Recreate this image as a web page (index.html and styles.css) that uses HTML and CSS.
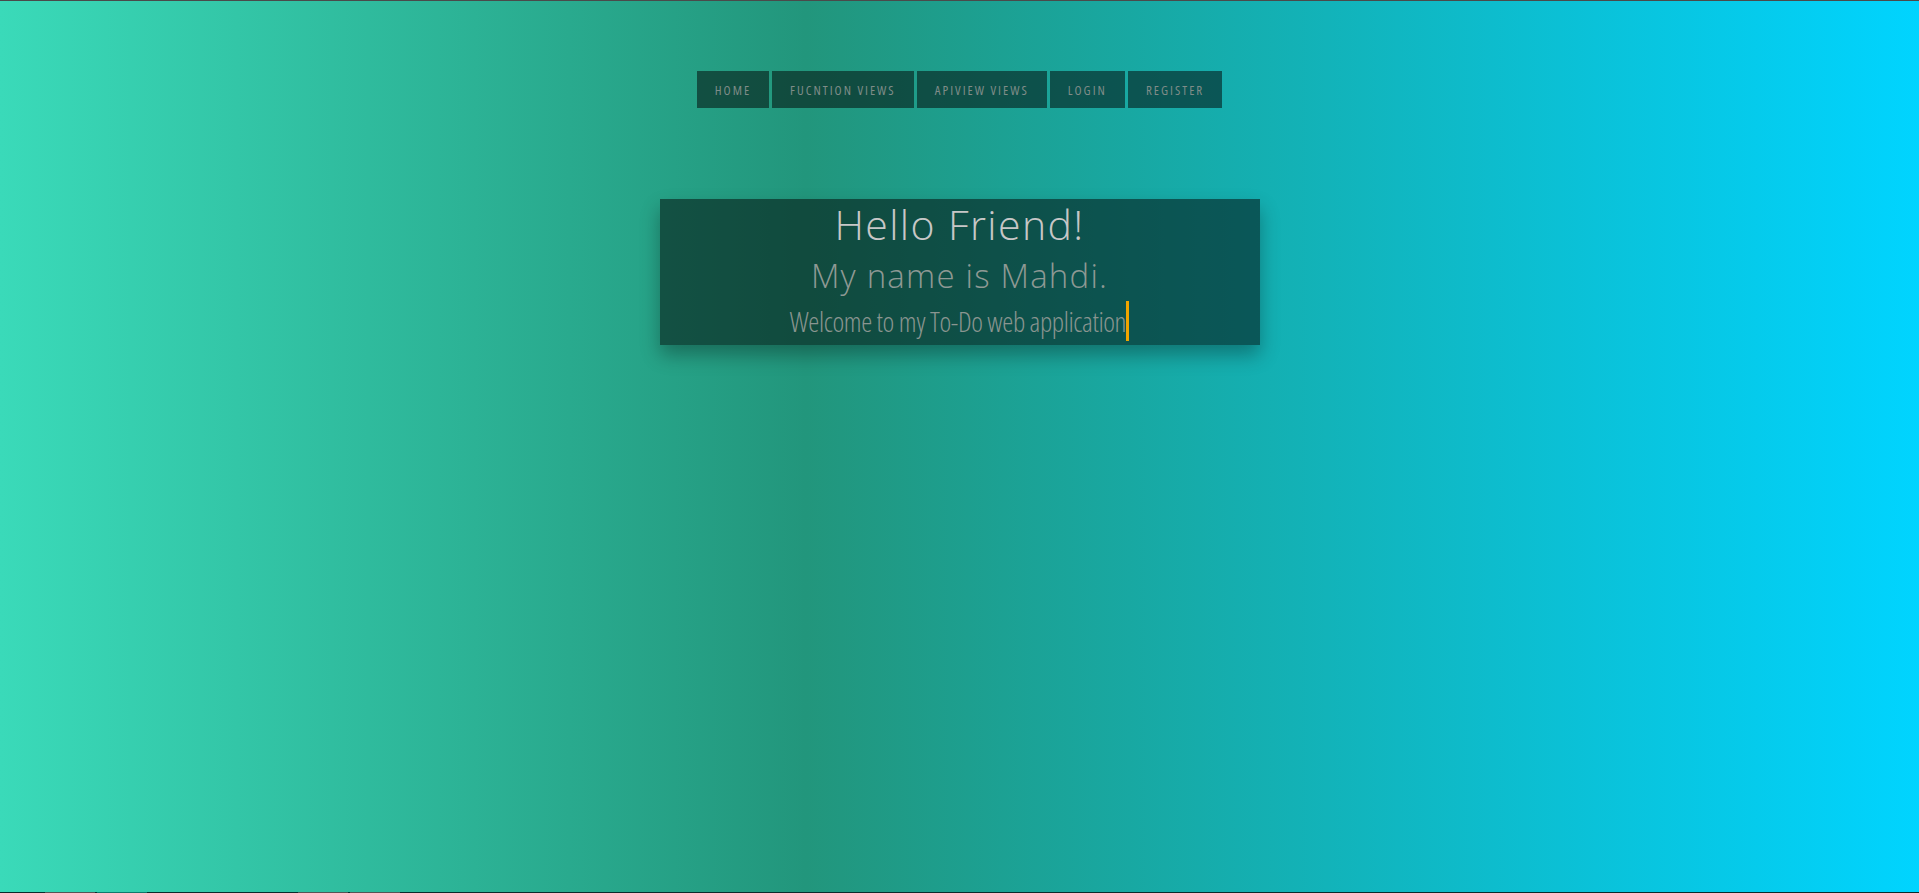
FILE: index.html
```html
<!DOCTYPE html>
<html lang="en">
<head>
<meta charset="utf-8">
<title>To-Do</title>
<link rel="stylesheet" href="styles.css">
</head>
<body>
<div class="page">
  <nav class="nav">
    <a class="nav-item" href="#">Home</a>
    <a class="nav-item" href="#">Fucntion Views</a>
    <a class="nav-item" href="#">APIView Views</a>
    <a class="nav-item" href="#">Login</a>
    <a class="nav-item" href="#">Register</a>
  </nav>
  <section class="hero">
    <h1 class="hero-title">Hello Friend!</h1>
    <h2 class="hero-sub">My name is Mahdi.</h2>
    <p class="hero-typed"><span class="typed">Welcome to my To-Do web application</span></p>
  </section>
</div>
<div class="bottom-strip">
  <span class="seg seg-a"></span><span class="seg seg-b"></span><span class="seg seg-gap"></span><span class="seg seg-a"></span><span class="seg seg-a2"></span>
</div>
</body>
</html>
```

FILE: styles.css
```css
html, body {
  margin: 0;
  padding: 0;
  height: 100%;
}
body {
  background: linear-gradient(90deg, #3adab9 0%, #22967c 42%, #00d4ff 100%);
  border-top: 1px solid #4a4a4a;
  box-sizing: border-box;
  min-height: 893px;
  overflow: hidden;
  font-family: "Open Sans", sans-serif;
}
.page {
  display: flex;
  flex-direction: column;
  align-items: center;
}
.nav {
  display: flex;
  gap: 3px;
  margin-top: 70px;
}
.nav-item {
  display: flex;
  align-items: center;
  justify-content: center;
  height: 37px;
  padding: 0 18px;
  background: rgba(0, 0, 0, 0.5);
  color: #7f8c88;
  text-decoration: none;
  text-transform: uppercase;
  font-family: "Open Sans", sans-serif;
  font-stretch: 75%;
  font-weight: 400;
  font-size: 13px;
  letter-spacing: 2px;
}
.hero {
  margin-top: 91px;
  width: 600px;
  height: 146px;
  background: rgba(0, 0, 0, 0.5);
  box-shadow: 0 10px 18px rgba(0, 0, 0, 0.3);
  display: flex;
  flex-direction: column;
  align-items: center;
  box-sizing: border-box;
}
.hero-title {
  margin: 0;
  font-family: "Open Sans", sans-serif;
  font-weight: 300;
  font-size: 41px;
  line-height: 50px;
  letter-spacing: 1.4px;
  color: #c7c7c7;
}
.hero-sub {
  margin: 4px 0 0;
  font-family: "Open Sans", sans-serif;
  font-weight: 300;
  font-size: 33px;
  line-height: 46px;
  letter-spacing: 1.2px;
  color: #8e9994;
}
.hero-typed {
  margin: 2px 0 0;
  font-family: "Open Sans", sans-serif;
  font-stretch: 75%;
  font-weight: 300;
  font-size: 28px;
  line-height: 40px;
  color: #8a9590;
  letter-spacing: -0.4px;
}
.typed {
  display: inline-block;
  border-right: 3px solid #f0a500;
  padding-right: 0;
}
.bottom-strip {
  position: fixed;
  left: 0;
  right: 0;
  bottom: 0;
  height: 1px;
  background: #0b2b2b;
  display: flex;
}
.seg { height: 1px; }
.seg-a { width: 50px; margin-left: 45px; background: #555; }
.seg-b { width: 50px; margin-left: 2px; background: #10796b; }
.seg-gap { width: 106px; }
.seg-a2 { width: 50px; margin-left: 2px; background: #555; }
```
